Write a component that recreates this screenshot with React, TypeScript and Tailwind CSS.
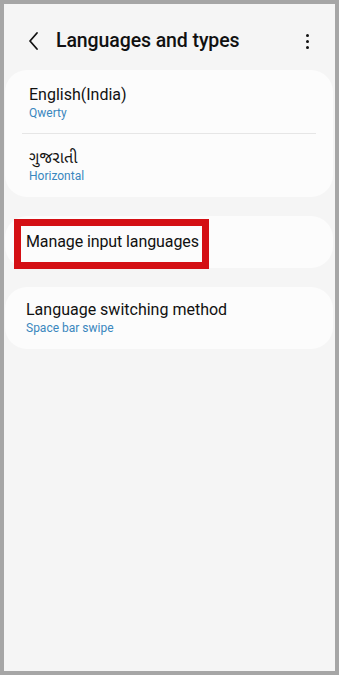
export default function App() {
  return (
    <div className="h-[675px] w-[339px] bg-[#a6a6a6] p-1" style={{ fontFamily: "Roboto, 'Noto Sans', 'Noto Sans Gujarati', sans-serif" }}>
      <div className="h-full w-full bg-[#f5f5f5] pl-[1px] pr-[2px] overflow-hidden">
        <div className="flex items-center h-[66px] pt-[8px] pl-[22px] pr-[20px]">
          <svg width="14" height="20" viewBox="0 0 14 20" className="shrink-0">
            <path d="M10 2 L3 10 L10 18" fill="none" stroke="#111" strokeWidth="1.8" strokeLinecap="round" strokeLinejoin="round" />
          </svg>
          <span className="ml-[15px] text-[19.5px] font-medium text-[#111] tracking-[-0.1px]">Languages and types</span>
          <div className="ml-auto flex flex-col gap-[3px] items-center mr-[4px]">
            <span className="w-[3px] h-[3px] rounded-full bg-[#111]" />
            <span className="w-[3px] h-[3px] rounded-full bg-[#111]" />
            <span className="w-[3px] h-[3px] rounded-full bg-[#111]" />
          </div>
        </div>

        <div className="bg-[#fcfcfc] rounded-[22px]">
          <div className="px-[24px] pt-[14px] pb-[13px]">
            <div className="text-[16px] text-[#111] leading-[22px]">English(India)</div>
            <div className="text-[12px] text-[#3a87be] leading-[14px]">Qwerty</div>
          </div>
          <div className="mx-[17px] h-px bg-[#e6e6e6]" />
          <div className="px-[24px] pt-[13px] pb-[14px]">
            <div className="text-[16px] text-[#111] leading-[22px]">ગુજરાતી</div>
            <div className="text-[12px] text-[#3a87be] leading-[14px]">Horizontal</div>
          </div>
        </div>

        <div className="mt-[19px] bg-[#fcfcfc] rounded-[22px] h-[52px] relative flex items-center px-[21px]">
          <span className="text-[16px] text-[#111] tracking-[-0.1px]">Manage input languages</span>
          <div className="absolute left-[9px] top-[3px] w-[195px] h-[50px] border-[7px] border-[#d40f14]" />
        </div>

        <div className="mt-[19px] bg-[#fcfcfc] rounded-[22px] h-[62px] flex flex-col justify-center px-[21px]">
          <div className="text-[16px] text-[#111] leading-[20px]">Language switching method</div>
          <div className="text-[12px] text-[#3a87be] leading-[16px]">Space bar swipe</div>
        </div>
      </div>
    </div>
  );
}
